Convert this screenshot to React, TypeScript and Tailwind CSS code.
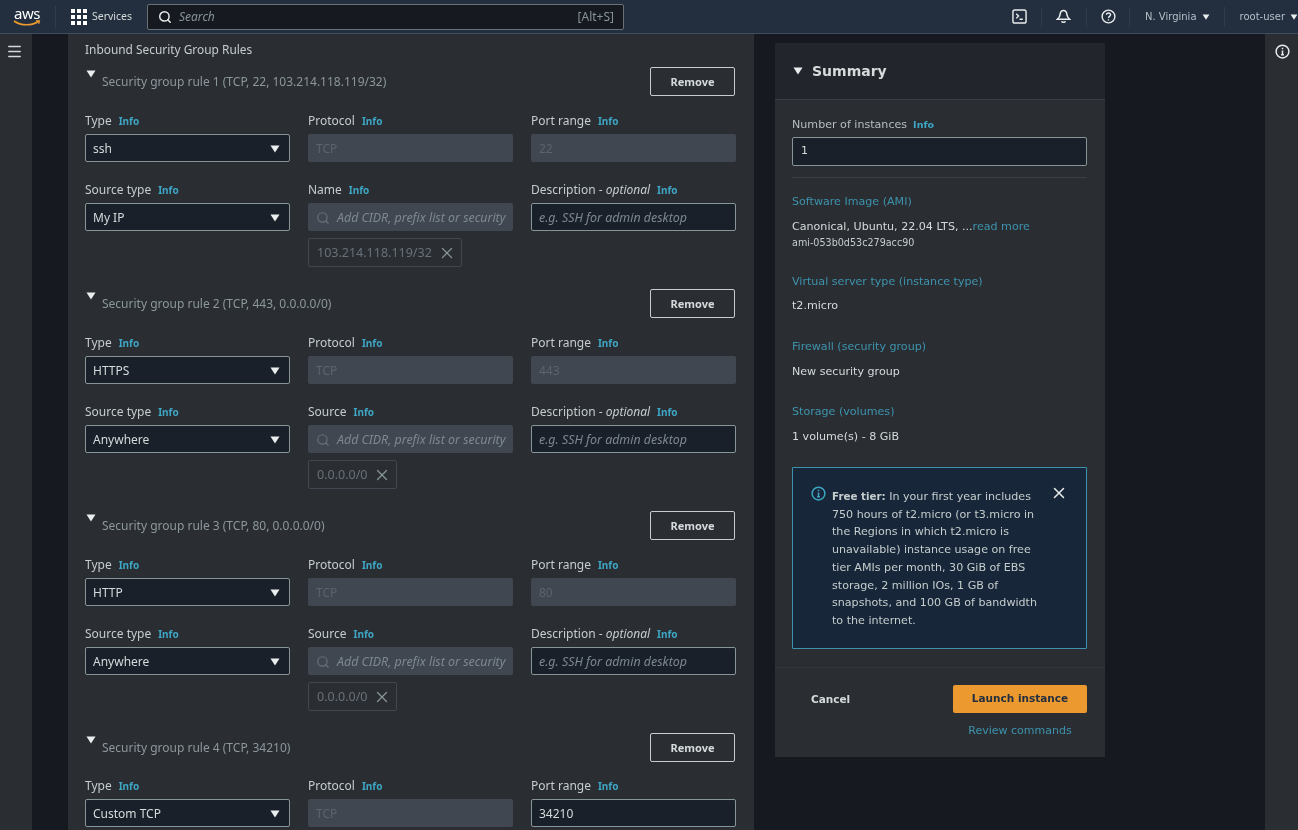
import { Search, X, Menu } from "lucide-react";

const LEFT_FONT = "font-['Noto_Sans',sans-serif]";

const RULES = [
  { title: "Security group rule 1 (TCP, 22, 103.214.118.119/32)", type: "ssh", port: "22", source: "My IP", nameLabel: "Name", chip: "103.214.118.119/32", chipW: "w-[154px]" },
  { title: "Security group rule 2 (TCP, 443, 0.0.0.0/0)", type: "HTTPS", port: "443", source: "Anywhere", nameLabel: "Source", chip: "0.0.0.0/0", chipW: "w-[89px]" },
  { title: "Security group rule 3 (TCP, 80, 0.0.0.0/0)", type: "HTTP", port: "80", source: "Anywhere", nameLabel: "Source", chip: "0.0.0.0/0", chipW: "w-[89px]" },
];

function Caret({ className = "" }: { className?: string }) {
  return (
    <svg viewBox="0 0 10 8" className={className} fill="currentColor">
      <path d="M0.5 0.5h9L5 7.5z" />
    </svg>
  );
}

function Label({ children }: { children: React.ReactNode }) {
  return (
    <div className="h-4 flex items-center gap-[7px] text-[12px] text-[#c5cdcd] whitespace-nowrap">
      <span>{children}</span>
      <span className="text-[10px] font-bold text-[#3ea6c4]">Info</span>
    </div>
  );
}

function Select({ value }: { value: string }) {
  return (
    <div className="h-7 mt-[5px] flex items-center justify-between pl-[7px] pr-[9px] pt-px bg-[#1a2029] border border-[#879596] rounded-[2px] text-[12px] text-[#d5dbdb]">
      <span>{value}</span>
      <Caret className="w-[10px] h-2 text-[#eaeded]" />
    </div>
  );
}

function Disabled({ value }: { value: string }) {
  return (
    <div className="h-7 mt-[5px] flex items-center px-2 pt-px bg-[#414750] rounded-[2px] text-[12px] text-[#5c636c]">
      {value}
    </div>
  );
}

function RuleHeader({ title }: { title: string }) {
  return (
    <div className="h-[29px] flex justify-between pr-[2px]">
      <div className="flex">
        <Caret className="w-[10px] h-2 mt-[3px] ml-px text-[#eaeded]" />
        <span className="ml-[6px] mt-[6px] text-[12px] text-[#8c979c]">{title}</span>
      </div>
      <button className="w-[85px] h-[29px] pt-px border border-[#c5cdcd] rounded-[2px] text-[11px] font-bold text-[#d5dbdb]">
        Remove
      </button>
    </div>
  );
}

function Rule({ rule }: { rule: (typeof RULES)[number] }) {
  return (
    <div className="mb-[22px]">
      <RuleHeader title={rule.title} />
      <div className="mt-[17px] grid grid-cols-[205px_205px_205px] gap-x-[18px] gap-y-5">
        <div>
          <Label>Type</Label>
          <Select value={rule.type} />
        </div>
        <div>
          <Label>Protocol</Label>
          <Disabled value="TCP" />
        </div>
        <div>
          <Label>Port range</Label>
          <Disabled value={rule.port} />
        </div>
        <div>
          <Label>Source type</Label>
          <Select value={rule.source} />
        </div>
        <div>
          <Label>{rule.nameLabel}</Label>
          <div className="h-7 mt-[5px] flex items-center pl-2 pt-[2px] gap-[7px] bg-[#414750] rounded-[2px] text-[12.400px] italic text-[#7d8890] whitespace-nowrap overflow-hidden">
            <Search className="w-[14px] h-[14px] shrink-0 text-[#687078]" />
            <span>Add CIDR, prefix list or security</span>
          </div>
          <div className={`h-[29px] mt-[7px] flex items-center justify-between pl-2 pr-[5px] pt-px border border-[#414750] rounded-[2px] text-[12.500px] text-[#687078] ${rule.chipW}`}>
            <span>{rule.chip}</span>
            <X className="w-[18px] h-[18px] text-[#879596]" strokeWidth={1.6} />
          </div>
        </div>
        <div>
          <div className="h-4 flex items-center gap-[7px] text-[12px] text-[#c5cdcd] whitespace-nowrap">
            <span>
              Description - <i>optional</i>
            </span>
            <span className="text-[10px] font-bold text-[#3ea6c4]">Info</span>
          </div>
          <div className="h-7 mt-[5px] flex items-center pl-[7px] pt-[2px] bg-[#1a2029] border border-[#879596] rounded-[2px] text-[12.400px] italic text-[#7d8890] whitespace-nowrap">
            e.g. SSH for admin desktop
          </div>
        </div>
      </div>
    </div>
  );
}

function SummaryItem({ link, top, gap, children }: { link: string; top: string; gap: string; children: React.ReactNode }) {
  return (
    <div className={top}>
      <div className="text-[11.100px] leading-4 text-[#3d93ad]">{link}</div>
      <div className={`${gap} text-[11.100px] leading-4 text-[#d5dbdb]`}>{children}</div>
    </div>
  );
}

function TopBar() {
  return (
    <header className="h-[34px] shrink-0 flex items-center bg-[#232f3e] border-b border-[#414d5c] text-[#d5dbdb]">
      <div className="w-[46px] ml-[10px] flex flex-col items-center">
        <span className="text-[15px] leading-[13px] text-white font-['Noto_Sans',sans-serif] -ml-[12px] -tracking-[0.5px]">aws</span>
        <svg viewBox="0 0 28 7" className="w-[28px] h-[7px] -ml-[12px]" fill="none" stroke="#ec9a30" strokeWidth="1.6">
          <path d="M1 1c7 5 18 5 25 0" />
          <path d="M23 .8h3.500l-.8 3" strokeWidth="1.2" />
        </svg>
      </div>
      <div className="w-px h-[22px] -ml-[1px] bg-[#2f3c4b]" />
      <div className="ml-[15px] grid grid-cols-[4px_4px_4px] gap-[2px]">
        {Array.from({ length: 9 }).map((_, i) => (
          <span key={i} className="w-1 h-1 bg-white" />
        ))}
      </div>
      <span className={`ml-[5px] w-[40px] whitespace-nowrap text-[10.500px] ${LEFT_FONT}`}>Services</span>
      <div className={`ml-[15px] w-[477px] h-[26px] flex items-center pl-[10px] pr-[9px] bg-[#16191f] border border-[#687078] rounded-[2px] text-[#879596] ${LEFT_FONT}`}>
        <Search className="w-[14px] h-[14px] text-[#eaeded]" strokeWidth={2.5} />
        <span className="ml-[7px] text-[12px] italic">Search</span>
        <span className="ml-auto text-[12px]">[Alt+S]</span>
      </div>
      <div className="ml-auto flex items-center h-full">
        <svg viewBox="0 0 16 16" className="w-[15px] h-[15px] text-[#eaeded]" fill="none" stroke="currentColor" strokeWidth="1.5">
          <rect x="1" y="1" width="14" height="14" rx="2" />
          <path d="M4.500 5l2.500 2.500L4.500 10M8 11h3.500" />
        </svg>
        <div className="w-px h-5 ml-[14px] bg-[#2f3c4b]" />
        <svg viewBox="0 0 16 16" className="w-[15px] h-[15px] ml-[14px] text-[#eaeded]" fill="none" stroke="currentColor" strokeWidth="1.6">
          <path d="M8 1.500c2.500 0 3.400 2 3.600 4.200.2 2 1 3.500 3 5.300H1.400c2-1.800 2.800-3.300 3-5.300C4.600 3.500 5.500 1.500 8 1.500z" />
          <path d="M6 13c.4 1.500 3.600 1.500 4 0" />
        </svg>
        <div className="w-px h-5 ml-[15px] bg-[#2f3c4b]" />
        <svg viewBox="0 0 16 16" className="w-[15px] h-[15px] ml-[14px] text-[#eaeded]" fill="none" stroke="currentColor" strokeWidth="1.5">
          <circle cx="8" cy="8" r="6.800" />
          <path d="M5.800 6.200C5.900 3.500 10.300 3.700 10.200 6.200c0 1.700-2.200 1.700-2.200 3.400M8 10.800v1.500" />
        </svg>
        <div className="w-px h-5 ml-[13px] bg-[#2f3c4b]" />
        <span className="ml-[15px] text-[10px] font-['DejaVu_Sans',sans-serif] text-[#b6bec9]">N. Virginia</span>
        <Caret className="w-2 h-[6px] ml-[5px] text-[#eaeded]" />
        <div className="w-px h-5 ml-[14px] bg-[#2f3c4b]" />
        <span className="ml-[15px] text-[10px] font-['DejaVu_Sans',sans-serif] text-[#b6bec9]">root-user</span>
        <Caret className="w-2 h-[6px] ml-[5px] text-[#eaeded]" />
      </div>
    </header>
  );
}

export default function App() {
  return (
    <div className="w-[1298px] h-[830px] flex flex-col overflow-hidden bg-[#16191f] blur-[0.6px]">
      <TopBar />
      <div className="flex-1 min-h-0 flex">
        <aside className="w-8 shrink-0 bg-[#2a2e33] flex pl-[6px] pt-[9px]">
          <Menu className="w-[17px] h-[17px] text-[#d5dbdb]" strokeWidth={2.2} />
        </aside>

        <main className={`ml-9 w-[686px] shrink-0 bg-[#2a2e33] px-[17px] pt-2 overflow-hidden ${LEFT_FONT}`}>
          <div className="h-4 mb-[9px] flex items-center text-[11.900px] text-[#c5cdcd]">Inbound Security Group Rules</div>
          {RULES.map((rule) => (
            <Rule key={rule.title} rule={rule} />
          ))}
          <RuleHeader title="Security group rule 4 (TCP, 34210)" />
          <div className="mt-4 grid grid-cols-[205px_205px_205px] gap-x-[18px]">
            <div>
              <Label>Type</Label>
              <Select value="Custom TCP" />
            </div>
            <div>
              <Label>Protocol</Label>
              <Disabled value="TCP" />
            </div>
            <div>
              <Label>Port range</Label>
              <div className="h-7 mt-[5px] flex items-center pl-[7px] pt-px bg-[#1a2029] border border-[#879596] rounded-[2px] text-[12px] text-[#d5dbdb]">
                34210
              </div>
            </div>
          </div>
        </main>

        <section className="ml-[21px] mt-[9px] w-[330px] h-[714px] shrink-0 flex flex-col bg-[#2a2e33] font-['DejaVu_Sans',sans-serif]">
          <div className="h-[57px] shrink-0 flex items-center px-[18px] bg-[#22262c] border-b border-[#3a3f45]">
            <Caret className="w-[10px] h-2 text-[#eaeded]" />
            <span className="ml-[9px] text-[14px] font-bold text-[#d5dbdb]">Summary</span>
          </div>
          <div className="flex-1 pl-[17px] pr-[18px] pt-[17px]">
            <div className="h-4 flex items-center gap-[6px] text-[11.100px] text-[#b6bec0]">
              <span>Number of instances</span>
              <span className="text-[9.500px] font-bold text-[#3ea6c4]">Info</span>
            </div>
            <div className="h-[29px] mt-1 flex items-center px-2 bg-[#1a2029] border border-[#879596] rounded-[2px] text-[11px] text-[#d5dbdb]">
              1
            </div>
            <div className="h-px mt-[11px] bg-[#3a3f45]" />
            <SummaryItem top="mt-4" gap="mt-[9px]" link="Software Image (AMI)">
              Canonical, Ubuntu, 22.04 LTS, ...<span className="text-[#3d93ad]">read more</span>
            </SummaryItem>
            <div className="text-[9.600px] leading-4 text-[#c5cdcd]">ami-053b0d53c279acc90</div>
            <SummaryItem top="mt-[23px]" gap="mt-2" link="Virtual server type (instance type)">t2.micro</SummaryItem>
            <SummaryItem top="mt-[25px]" gap="mt-[9px]" link="Firewall (security group)">New security group</SummaryItem>
            <SummaryItem top="mt-[24px]" gap="mt-[9px]" link="Storage (volumes)">1 volume(s) - 8 GiB</SummaryItem>

            <div className="mt-[22px] h-[182px] flex bg-[#172638] border border-[#3d93ad] rounded-[1px] pl-[18px] pt-[18px] pr-[18px]">
              <svg viewBox="0 0 16 16" className="w-[15px] h-[15px] shrink-0 text-[#3ea6c4]" fill="none" stroke="currentColor" strokeWidth="1.6">
                <circle cx="8" cy="8" r="6.800" />
                <path d="M8 7v4.500M6.500 11.500h3M8 4v1.600" />
              </svg>
              <p className="ml-[6px] w-[212px] shrink-0 mt-[2px] text-[11.100px] leading-[17.700px] text-[#c5cdcd]">
                <b className="text-[10.300px]">Free tier:</b> In your first year includes 750 hours of t2.micro (or t3.micro in the Regions in which t2.micro is unavailable) instance usage on free tier AMIs per month, 30 GiB of EBS storage, 2 million IOs, 1 GB of snapshots, and 100 GB of bandwidth to the internet.
              </p>
              <X className="w-[18px] h-[18px] -mt-[2px] ml-auto shrink-0 text-[#eaeded]" />
            </div>
          </div>
          <div className="h-[90px] shrink-0 border-t border-[#33373d] pl-[17px] pr-[18px] pt-[17px] flex justify-between">
            <span className="ml-[19px] mt-[7px] text-[10.500px] font-bold text-[#d5dbdb]">Cancel</span>
            <div className="flex flex-col items-center">
              <button className="w-[134px] h-[28px] bg-[#ec9a30] rounded-[2px] text-[10.500px] font-bold text-[#232f3e]">
                Launch instance
              </button>
              <span className="mt-[10px] text-[11px] leading-4 text-[#3d93ad]">Review commands</span>
            </div>
          </div>
        </section>

        <aside className="ml-[160px] w-[33px] shrink-0 bg-[#2a2e33] flex pl-[10px] pt-[10px]">
          <svg viewBox="0 0 16 16" className="w-[15px] h-[15px] text-[#eaeded]" fill="none" stroke="currentColor" strokeWidth="1.600">
            <circle cx="8" cy="8" r="6.800" />
            <path d="M8 7v4.500M6.500 11.500h3M8 4v1.600" />
          </svg>
        </aside>
      </div>
    </div>
  );
}
